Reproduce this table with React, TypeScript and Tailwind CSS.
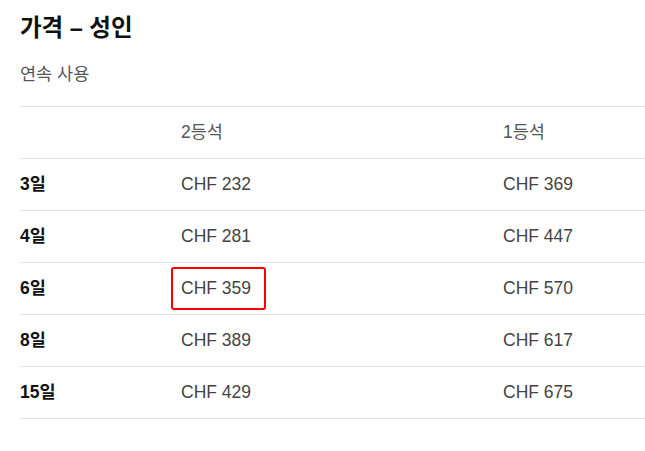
const rows = [
  { days: '3일', second: 'CHF 232', first: 'CHF 369' },
  { days: '4일', second: 'CHF 281', first: 'CHF 447' },
  { days: '6일', second: 'CHF 359', first: 'CHF 570', highlight: true },
  { days: '8일', second: 'CHF 389', first: 'CHF 617' },
  { days: '15일', second: 'CHF 429', first: 'CHF 675' },
];

export default function App() {
  return (
    <div className="min-h-screen bg-white pl-5 pt-3 font-['Liberation_Sans','Noto_Sans_CJK_KR',sans-serif]">
      <h2 className="text-[23.5px] font-bold leading-8 text-[#111]">가격 – 성인</h2>
      <p className="mt-[18px] text-[17.5px] leading-6 text-[#555]">연속 사용</p>

      <div className="mt-5 border-b border-[#e3e3e3] text-[17.5px]">
        {/* header */}
        <div className="grid h-[52px] grid-cols-[161px_322px_1fr] items-center border-t border-[#e3e3e3] text-[#555]">
          <span />
          <span>2등석</span>
          <span>1등석</span>
        </div>

        {rows.map((r) => (
          <div key={r.days} className="grid h-[52px] grid-cols-[161px_322px_1fr] items-center border-t border-[#e3e3e3]">
            <span className="font-bold text-[#111]">{r.days}</span>
            {r.highlight ? (
              <span className="-ml-[10px] flex h-[43px] w-[95px] items-center rounded-[3px] border-2 border-[#ff0000] pl-2 text-[#444]">
                {r.second}
              </span>
            ) : (
              <span className="text-[#444]">{r.second}</span>
            )}
            <span className="text-[#444]">{r.first}</span>
          </div>
        ))}
      </div>
    </div>
  );
}
